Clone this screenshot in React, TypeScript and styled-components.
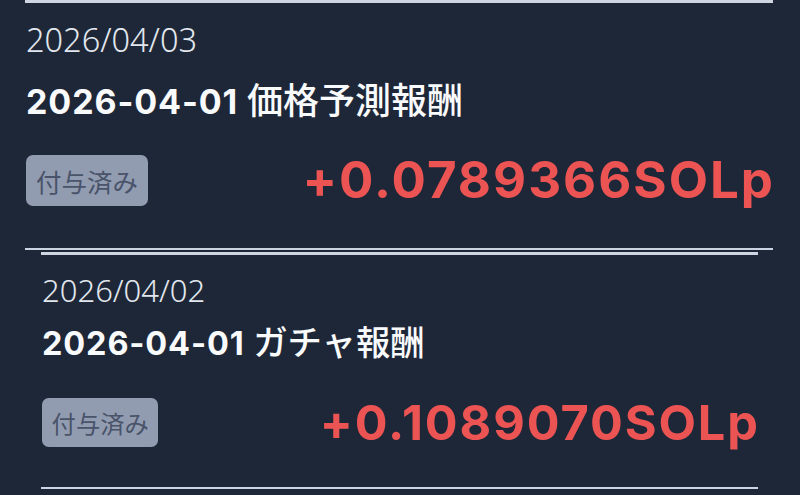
import * as React from "react";
import styled, { createGlobalStyle } from "styled-components";

interface Reward {
  date: string;
  day: string;
  label: string;
  amount: string;
  status: string;
}

const REWARDS: Reward[] = [
  {
    date: "2026/04/03",
    day: "2026-04-01",
    label: "価格予測報酬",
    amount: "+0.0789366SOLp",
    status: "付与済み",
  },
  {
    date: "2026/04/02",
    day: "2026-04-01",
    label: "ガチャ報酬",
    amount: "+0.1089070SOLp",
    status: "付与済み",
  },
];

// the second row of the capture sits a little further in and a little smaller,
// and its title hugs the date a bit more tightly
const LAYOUT = [
  { inset: 25, width: 748, scale: 1, titleGap: 17, footerGap: 29 },
  { inset: 41, width: 717, scale: 0.955, titleGap: 11, footerGap: 31 },
];

const GlobalStyle = createGlobalStyle`
  html, body {
    margin: 0;
    padding: 0;
    background: #1e2737;
  }
  body {
    font-family: "Noto Sans", "Noto Sans CJK JP", sans-serif;
    -webkit-font-smoothing: antialiased;
  }
`;

const List = styled.div`
  display: flex;
  flex-direction: column;
  gap: 2px;
  width: 800px;
  height: 495px;
  overflow: hidden;
  background: #1e2737;
`;

const Card = styled.div<{ $inset: number; $width: number; $scale: number }>`
  --s: ${(p) => p.$scale};
  display: flex;
  flex-direction: column;
  box-sizing: border-box;
  margin-left: ${(p) => p.$inset}px;
  width: ${(p) => p.$width}px;
  padding: calc(17px * var(--s)) 0 calc(40px * var(--s));
  border-top: 3px solid #cfd6e2;
  border-bottom: 2px solid #cbd5e1;
`;

const DateText = styled.div`
  font-family: "Noto Sans", sans-serif;
  font-weight: 300;
  font-size: calc(32.5px * var(--s));
  line-height: calc(40px * var(--s));
  color: #e2e7ef;
  padding-left: 1px;
`;

const Title = styled.div<{ $gap: number }>`
  margin-top: ${(p) => p.$gap}px;
  font-family: "Inter", "Noto Sans CJK JP", sans-serif;
  font-weight: 700;
  font-size: calc(34px * var(--s));
  line-height: calc(42px * var(--s));
  letter-spacing: calc(0.9px * var(--s));
  color: #f8fafc;
  white-space: nowrap;
  padding-left: 1px;
`;

const TitleLabel = styled.span`
  font-family: "Noto Sans CJK JP", sans-serif;
  font-weight: 500;
  font-size: calc(36px * var(--s));
  letter-spacing: 0;
`;

const Footer = styled.div<{ $gap: number }>`
  display: flex;
  justify-content: space-between;
  align-items: center;
  margin-top: ${(p) => p.$gap}px;
`;

const StatusBadge = styled.div`
  display: flex;
  align-items: center;
  box-sizing: border-box;
  height: calc(51px * var(--s));
  margin-left: 1px;
  padding: 0 calc(10px * var(--s));
  border-radius: calc(7px * var(--s));
  background: #929cb1;
  color: #49536a;
  font-family: "Noto Sans CJK JP", sans-serif;
  font-size: calc(25.5px * var(--s));
  white-space: nowrap;
`;

const Amount = styled.div`
  font-family: "Inter", "Liberation Sans", sans-serif;
  font-weight: 700;
  font-size: calc(51px * var(--s));
  line-height: calc(56px * var(--s));
  letter-spacing: calc(2px * var(--s));
  margin-right: calc(-2px * var(--s));
  color: #ec5454;
  white-space: nowrap;
`;

const RewardRow: React.FC<{ reward: Reward; index: number }> = ({ reward, index }) => {
  const { inset, width, scale, titleGap, footerGap } = LAYOUT[index] ?? LAYOUT[0];
  return (
    <Card $inset={inset} $width={width} $scale={scale}>
      <DateText>{reward.date}</DateText>
      <Title $gap={titleGap}>
        {reward.day} <TitleLabel>{reward.label}</TitleLabel>
      </Title>
      <Footer $gap={footerGap}>
        <StatusBadge>{reward.status}</StatusBadge>
        <Amount>{reward.amount}</Amount>
      </Footer>
    </Card>
  );
};

const App: React.FC = () => (
  <>
    <GlobalStyle />
    <List>
      {REWARDS.map((r, i) => (
        <RewardRow key={r.date} reward={r} index={i} />
      ))}
    </List>
  </>
);

export default App;
